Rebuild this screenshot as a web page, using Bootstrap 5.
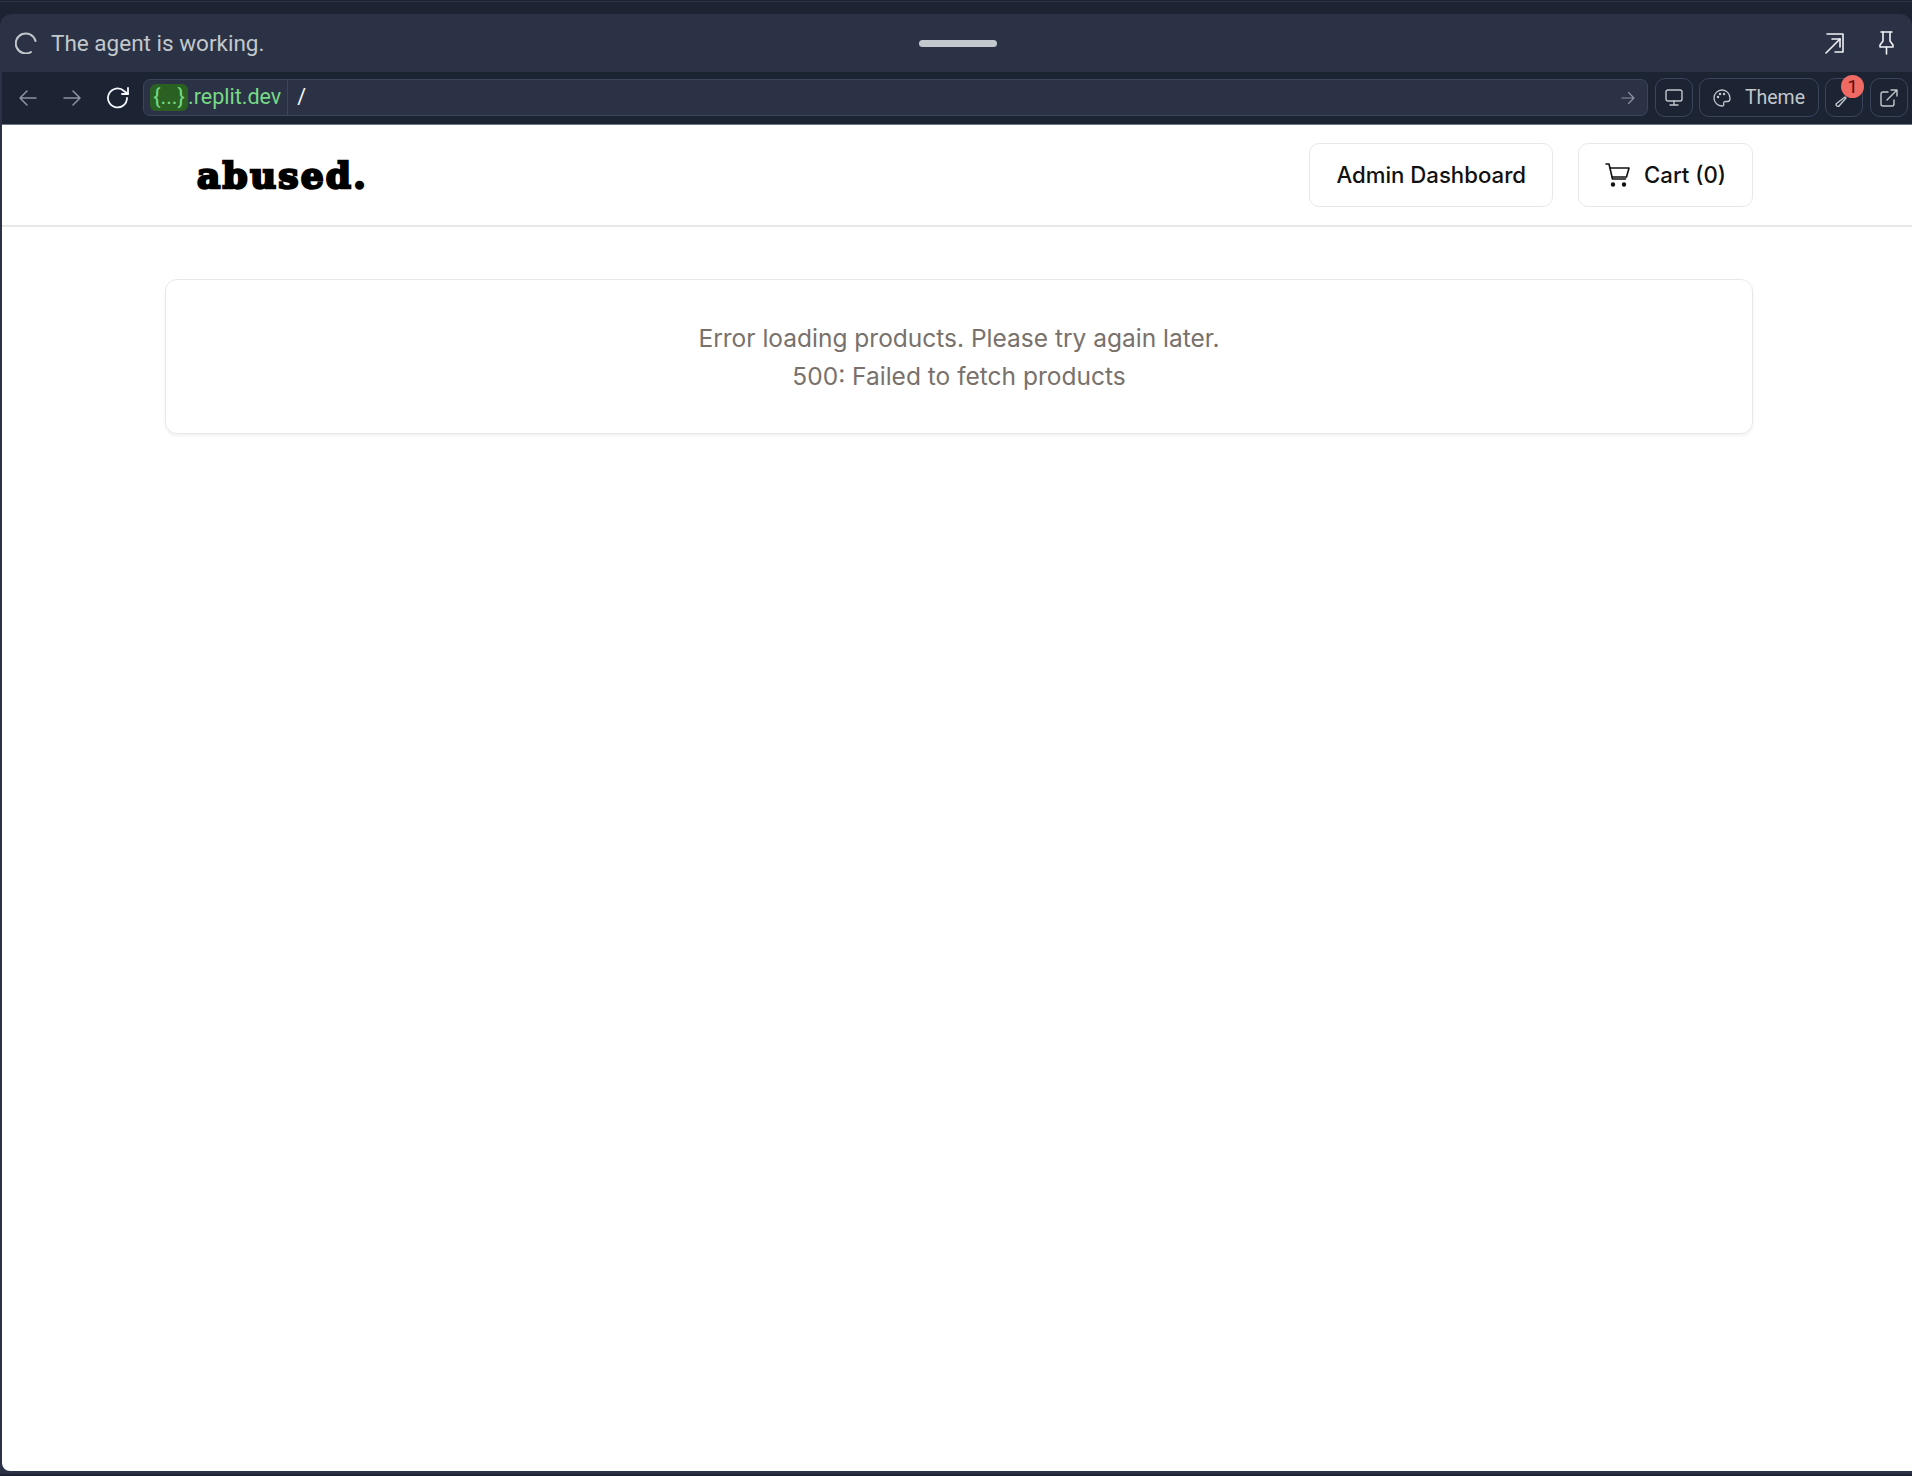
<!DOCTYPE html>
<html lang="en">
<head>
  <meta charset="UTF-8" />
  <meta name="viewport" content="width=device-width, initial-scale=1" />
  <title>abused.</title>
  <link href="https://cdn.jsdelivr.net/npm/bootstrap@5.3.0/dist/css/bootstrap.min.css" rel="stylesheet" />
  <style>
    html, body { height: 100%; }
    body {
      background: #1c2333;
      overflow: hidden;
      font-family: "Inter", sans-serif;
    }
    .app-frame { height: 1476px; }
    .top-strip { height: 13px; border-top: 1px solid #2b3245; margin-top: 1px; }
    .pane {
      height: 1460px;
      background: #2b3245;
      border-radius: 12px 12px 0 0;
    }
    .agent-bar { height: 58px; padding: 0 17px 0 15px; }
    .agent-text {
      font-family: "Roboto", sans-serif;
      font-size: 22.5px;
      color: #c2c8cc;
      margin-left: 14px;
      padding-top: 1px;
    }
    .drag-handle { width: 78px; height: 7px; border-radius: 4px; background: #c2c8cc; left: 919px; top: 39px; }
    .url-bar {
      height: 52px;
      background: #1c2333;
      margin-left: 2px;
      padding: 7px 4px 7px 0;
      gap: 6px;
    }
    .nav-icons { width: 135px; flex: none; padding-left: 16px; gap: 24px; }
    .url-box {
      height: 37px;
      background: #2b3245;
      border: 1px solid #3c445c;
      border-radius: 7px;
      padding-left: 6px;
      padding-right: 12px;
      font-family: "Roboto", sans-serif;
      font-size: 21.5px;
    }
    .url-host { color: #77d985; padding-right: 6px; border-right: 1px solid #3c445c; height: 100%; }
    .url-chip { background: #2a6122; border-radius: 6px; width: 38px; text-align: center; height: 27px; line-height: 26px; }
    .url-path { color: #f5f9fc; margin-left: 9px; }
    .tool-btn {
      height: 39px;
      margin-top: -1px;
      border: 1px solid #3c445c;
      border-radius: 10px;
      color: #c2c8cc;
      font-family: "Roboto", sans-serif;
      font-size: 19.5px;
      flex: none;
    }
    .tool-sm { width: 38px; }
    .tool-gap { margin-left: 1px; }
    .tool-theme { width: 120px; gap: 14px; }
    .tool-badge {
      width: 23px;
      height: 23px;
      top: -4px;
      right: -2px;
      background: #ee6a63;
      color: #5c0f0c;
      font-size: 19px;
      line-height: 23px;
      text-align: center;
      border-radius: 50%;
    }
    .page-view {
      height: 1347px;
      margin-left: 2px;
      background: #fff;
      border-radius: 0 0 0 8px;
      border-top: 1px solid #6f7689;
    }
    .shop-header { height: 102px; border-bottom: 2px solid #e8e8e8; padding: 0 159px 0 195px; }
    .shop-logo {
      font-family: "DejaVu Serif", serif;
      font-weight: 700;
      font-size: 36px;
      letter-spacing: 2.2px;
      color: #000;
      -webkit-text-stroke: 2.4px #000;
      line-height: 1;
    }
    .shop-btn {
      height: 64px;
      background: #fff;
      border: 1px solid #e8e8e8;
      border-radius: 10px;
      font-size: 22.2px;
      font-weight: 450;
      color: #111;
      padding: 0 26px;
      gap: 14px;
    }
    .shop-actions { gap: 25px; }
    .error-card {
      margin: 52px 159px 0 163px;
      height: 155px;
      border: 1px solid #e8e8e8;
      border-radius: 12px;
      box-shadow: 0 2px 3px rgba(0, 0, 0, .06);
      color: #78716c;
      font-size: 24.5px;
      line-height: 38px;
    }
    svg { display: block; flex: none; }
  </style>
</head>
<body>
  <div class="app-frame position-relative">
    <div class="top-strip"></div>
    <div class="pane d-flex flex-column">
      <div class="agent-bar d-flex align-items-center justify-content-between">
        <div class="d-flex align-items-center">
          <svg width="22" height="22" viewBox="0 0 22 22" fill="none" stroke="#c2c8cc" stroke-width="2" stroke-linecap="round"><path d="M20.500 9A10 10 0 1 0 16 20"/></svg>
          <span class="agent-text">The agent is working.</span>
        </div>
        <div class="d-flex align-items-center" style="gap:33px">
          <svg width="20" height="22" viewBox="0 0 20 22" fill="none" stroke="#f0f2f5" stroke-width="1.6" stroke-linecap="round" stroke-linejoin="round"><path d="M2 2h16v18h-8"/><path d="M1 21 15 7"/><path d="M7 7h8v8"/></svg>
          <svg width="17" height="24" viewBox="0 0 17 24" fill="none" stroke="#f0f2f5" stroke-width="1.6" stroke-linecap="round" stroke-linejoin="round"><path d="M3 1h11"/><path d="M5 1v9l-3 4v2h13v-2l-3-4V1"/><path d="M8.500 16v7"/></svg>
        </div>
      </div>
      <div class="drag-handle position-absolute"></div>
      <div class="url-bar d-flex">
        <div class="nav-icons d-flex align-items-center">
          <svg width="20" height="18" viewBox="0 0 20 18" fill="none" stroke="#8d93a3" stroke-width="1.5" stroke-linecap="round" stroke-linejoin="round"><path d="M18 9H2M9 2 2 9l7 7"/></svg>
          <svg width="20" height="18" viewBox="0 0 20 18" fill="none" stroke="#8d93a3" stroke-width="1.5" stroke-linecap="round" stroke-linejoin="round"><path d="M2 9h16M11 2l7 7-7 7"/></svg>
          <svg width="24" height="22" viewBox="0 0 24 22" fill="none" stroke="#f5f9fc" stroke-width="1.8" stroke-linecap="round" stroke-linejoin="round"><path d="M21 11a9.500 9.500 0 1 1-3-7l4 3"/><path d="M22 1v6h-6"/></svg>
        </div>
        <div class="url-box d-flex flex-grow-1 align-items-center">
          <div class="url-host d-flex align-items-center"><span class="url-chip">{...}</span><span>.replit.dev</span></div>
          <span class="url-path flex-grow-1">/</span>
          <svg width="14" height="14" viewBox="0 0 14 14" fill="none" stroke="#8d93a3" stroke-width="1.2" stroke-linecap="round" stroke-linejoin="round"><path d="M1 7h12M7.500 1.500 13 7l-5.500 5.500"/></svg>
        </div>
        <div class="tool-btn tool-sm tool-gap d-flex align-items-center justify-content-center">
          <svg width="18" height="17" viewBox="0 0 18 17" fill="none" stroke="#c2c8cc" stroke-width="1.4" stroke-linecap="round" stroke-linejoin="round"><rect x="1" y="1" width="16" height="11" rx="2"/><path d="M9 12v4M5 16h8"/></svg>
        </div>
        <div class="tool-btn tool-theme d-flex align-items-center justify-content-center">
          <svg width="18" height="18" viewBox="0 0 18 18" fill="none" stroke="#c2c8cc" stroke-width="1.3" stroke-linecap="round" stroke-linejoin="round"><path d="M9 1a8 8 0 0 0 0 16c1.500 0 2-1 1.700-2-.4-1.500.5-2.500 2-2.500h2c1.500 0 2.300-1.200 2.300-3C17 4.500 13.500 1 9 1Z"/><circle cx="5" cy="8" r=".6"/><circle cx="7" cy="5" r=".6"/><circle cx="11" cy="5" r=".6"/></svg>
          <span>Theme</span>
        </div>
        <div class="tool-btn tool-sm d-flex align-items-center justify-content-center position-relative">
          <svg width="18" height="18" viewBox="0 0 18 18" fill="none" stroke="#c2c8cc" stroke-width="1.4" stroke-linecap="round" stroke-linejoin="round"><path d="M1.500 14.500 10 8l1 1-6.500 7.500a1.500 1.500 0 0 1-3-2Z"/></svg>
          <span class="tool-badge position-absolute">1</span>
        </div>
        <div class="tool-btn tool-sm tool-gap d-flex align-items-center justify-content-center">
          <svg width="18" height="18" viewBox="0 0 18 18" fill="none" stroke="#c2c8cc" stroke-width="1.4" stroke-linecap="round" stroke-linejoin="round"><path d="M8 3H3a2 2 0 0 0-2 2v10a2 2 0 0 0 2 2h9a2 2 0 0 0 2-2v-4"/><path d="M7 11 17 1M11 1h6v6"/></svg>
        </div>
      </div>
      <div class="page-view">
        <div class="shop-header d-flex align-items-center justify-content-between">
          <span class="shop-logo">abused.</span>
          <div class="shop-actions d-flex">
            <button class="btn shop-btn d-flex align-items-center">Admin Dashboard</button>
            <button class="btn shop-btn d-flex align-items-center">
              <svg width="25" height="24" viewBox="0 0 25 24" fill="none" stroke="#111" stroke-width="1.6" stroke-linecap="round" stroke-linejoin="round"><path d="M1 1h3l3.500 15h13"/><path d="M5 5h19l-2.500 9H7"/><circle cx="8" cy="21.500" r="1.400" fill="#111"/><circle cx="19" cy="21.500" r="1.400" fill="#111"/></svg>
              <span>Cart (0)</span>
            </button>
          </div>
        </div>
        <div class="error-card d-flex flex-column align-items-center justify-content-center">
          <div>Error loading products. Please try again later.</div>
          <div>500: Failed to fetch products</div>
        </div>
      </div>
    </div>
    <script src="https://cdn.jsdelivr.net/npm/bootstrap@5.3.0/dist/js/bootstrap.bundle.min.js"></script>
  </div>
</body>
</html>
